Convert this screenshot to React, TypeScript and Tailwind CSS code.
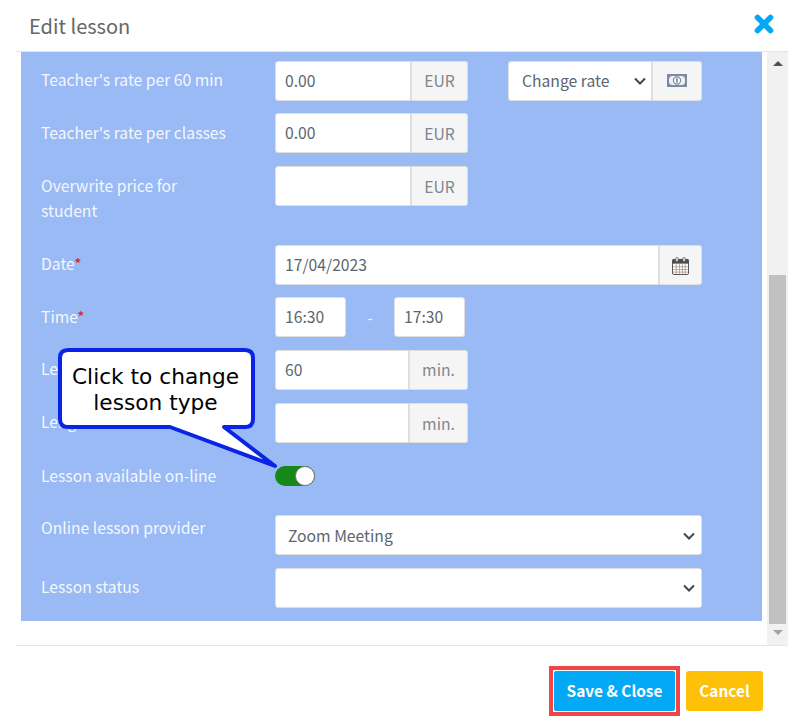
import React from "react";

const font = { fontFamily: '"Noto Sans CJK SC", "Noto Sans", sans-serif' };

function Row({ mt, label, req, children, labelClass = "pt-[6px]" }: { mt: string; label: React.ReactNode; req?: boolean; children?: React.ReactNode; labelClass?: string }) {
  return (
    <div className={`flex items-start ${mt}`}>
      <div className={`w-[234px] shrink-0 text-[#f4f7fe] text-[15.7px] leading-[25px] ${labelClass}`}>
        {label}
        {req && <span className="text-[#e0192f]">*</span>}
      </div>
      {children}
    </div>
  );
}

function Input({ value, w, noRadiusRight }: { value?: string; w: string; noRadiusRight?: boolean }) {
  return (
    <div className={`${w} h-10 bg-white border border-[#dedede] ${noRadiusRight ? "rounded-l-[3px]" : "rounded-[3px]"} flex items-center pl-[9px] text-[15.7px] text-[#5c6670] shrink-0`}>
      {value}
    </div>
  );
}

function Addon({ w, children, low }: { w: string; children: React.ReactNode; low?: boolean }) {
  return (
    <div className={`${w} h-10 bg-[#f5f5f5] border border-[#dedede] border-l-[#e0e0e0] rounded-r-[3px] flex items-center justify-center text-[15.7px] text-[#7e8791] shrink-0 ${low ? "pt-[2px]" : ""}`}>
      {children}
    </div>
  );
}

function Chevron() {
  return (
    <svg width="12" height="8" viewBox="0 0 12 8" fill="none" className="shrink-0">
      <path d="M1 1.5 L6 6.5 L11 1.5" stroke="#444" strokeWidth="2" />
    </svg>
  );
}

function MoneyIcon() {
  return (
    <svg width="20" height="13" viewBox="0 0 20 13" className="mb-[2px]">
      <rect x="0" y="0" width="20" height="13" fill="#7c8ba0" />
      <rect x="2" y="2" width="16" height="9" rx="3.5" fill="#eef1f5" />
      <circle cx="10" cy="6.5" r="3.6" fill="#fff" stroke="#7c8ba0" strokeWidth="1.2" />
      <rect x="9.3" y="4.2" width="1.4" height="4.6" fill="#6c7b90" />
    </svg>
  );
}

function CalendarIcon() {
  return (
    <svg width="17" height="18" viewBox="0 0 18 19" className="mt-[1px]">
      <rect x="0.5" y="2.5" width="17" height="16" rx="1.5" fill="#fff" stroke="#4d4d4d" />
      <rect x="0.5" y="2.5" width="17" height="4.5" fill="#4d4d4d" />
      <rect x="4" y="0.5" width="2.4" height="4.5" rx="1.2" fill="#fff" stroke="#4d4d4d" strokeWidth="0.8" />
      <rect x="11.6" y="0.5" width="2.4" height="4.5" rx="1.2" fill="#fff" stroke="#4d4d4d" strokeWidth="0.8" />
      <path d="M1 10.3H17M1 13.3H17M1 16H17M4.5 7V18M8 7V18M11 7V18M14 7V18" stroke="#a08468" strokeWidth="0.7" />
    </svg>
  );
}

function Callout() {
  return (
    <div className="absolute left-[56px] top-[346px] w-[224px] h-[124px]">
      <svg width="224" height="124" viewBox="0 0 224 124" className="absolute inset-0">
        <path
          d="M12 4 H189 Q197 4 197 12 V73 Q197 81 189 81 H168 L219 120 L114 81 H12 Q4 81 4 73 V12 Q4 4 12 4 Z"
          fill="#fff"
          stroke="#0a24e6"
          strokeWidth="4"
          strokeLinejoin="round"
        />
      </svg>
      <div
        className="absolute left-[3px] top-[18px] w-[193px] text-center text-black text-[21.7px] leading-[26px]"
        style={{ fontFamily: '"DejaVu Sans", sans-serif' }}
      >
        Click to change
        <br />
        lesson type
      </div>
    </div>
  );
}

export default function App() {
  return (
    <div className="relative w-[804px] h-[728px] bg-white overflow-hidden" style={font}>
      <div className="ml-4 w-[772px]">
        <div className="h-[52px] border-b border-[#e5e5e5] flex items-center justify-between pl-[13px] pr-[14px]">
          <div className="text-[20px] text-[#666] pt-[1px]">Edit lesson</div>
          <svg width="20" height="20" viewBox="0 0 20 20" className="mb-[4px]">
            <path d="M3.5 3.5 L16.5 16.5 M16.5 3.5 L3.5 16.5" stroke="#03a9f4" strokeWidth="5.6" strokeLinecap="round" />
          </svg>
        </div>
        <div className="flex h-[594px] border-b border-[#e5e5e5]">
          <div className="ml-[5px] w-[741px] h-[569px] bg-[#99baf4] pl-5 pt-[9px] shrink-0">
            <Row mt="" label="Teacher's rate per 60 min">
              <Input w="w-[136px]" value="0.00" noRadiusRight />
              <Addon w="w-[57px]">EUR</Addon>
              <div className="ml-10 w-[144px] h-10 bg-white border border-[#dedede] rounded-l-[3px] flex items-center justify-between pl-[13px] pr-[5px] text-[15.7px] text-[#5c6670]">
                Change rate
                <Chevron />
              </div>
              <Addon w="w-[50px]"><MoneyIcon /></Addon>
            </Row>
            <Row mt="mt-3" label="Teacher's rate per classes" labelClass="pt-[7px]">
              <Input w="w-[136px]" value="0.00" noRadiusRight />
              <Addon w="w-[57px]" low>EUR</Addon>
            </Row>
            <div className="h-[79px] mt-[13px]">
              <Row mt="" label={<>Overwrite price for<br />student</>} labelClass="pt-[7px]">
                <Input w="w-[136px]" noRadiusRight />
                <Addon w="w-[57px]" low>EUR</Addon>
              </Row>
            </div>
            <Row mt="" label="Date" req>
              <Input w="w-[384px]" value="17/04/2023" noRadiusRight />
              <Addon w="w-[43px]"><CalendarIcon /></Addon>
            </Row>
            <Row mt="mt-3" label="Time" req labelClass="pt-[7px]">
              <Input w="w-[71px]" value="16:30" />
              <div className="w-[48px] h-10 flex items-center justify-center text-[#eef3fd] text-[16px]">-</div>
              <Input w="w-[71px]" value="17:30" />
            </Row>
            <Row mt="mt-[13px]" label="Length">
              <Input w="w-[134px]" value="60" noRadiusRight />
              <Addon w="w-[59px]">min.</Addon>
            </Row>
            <Row mt="mt-[13px]" label="Length">
              <Input w="w-[134px]" noRadiusRight />
              <Addon w="w-[59px]" low>min.</Addon>
            </Row>
            <div className="flex items-center h-5 mt-[23px]">
              <div className="w-[234px] shrink-0 text-[#f4f7fe] text-[15.7px] leading-[25px] pb-[2px]">Lesson available on-line</div>
              <div className="w-10 h-5 rounded-full bg-[#16881a] flex items-center justify-end">
                <div className="w-5 h-5 rounded-full bg-white border border-[#777]" />
              </div>
            </div>
            <Row mt="mt-[29px]" label="Online lesson provider" labelClass="pt-0">
              <div className="w-[427px] h-10 bg-white border border-[#dedede] rounded-[3px] flex items-center justify-between pl-[12px] pr-[6px] pt-[1px] text-[15.7px] text-[#5c6670]">
                Zoom Meeting
                <Chevron />
              </div>
            </Row>
            <Row mt="mt-[13px]" label="Lesson status">
              <div className="w-[427px] h-10 bg-white border border-[#dedede] rounded-[3px] flex items-center justify-end pr-[6px]">
                <Chevron />
              </div>
            </Row>
          </div>
          <div className="ml-[5px] w-[21px] h-full bg-[#f1f1f1] flex flex-col items-center shrink-0">
            <div className="h-[223px] w-full flex justify-center pt-[9px]">
              <div className="w-0 h-0 border-x-[5px] border-x-transparent border-b-[5px] border-b-[#505050]" />
            </div>
            <div className="w-[17px] h-[349px] bg-[#c1c1c1]" />
            <div className="flex-1 w-full flex justify-center pt-[6px]">
              <div className="w-0 h-0 border-x-[5px] border-x-transparent border-t-[5px] border-t-[#a3a3a3]" />
            </div>
          </div>
        </div>
        <div className="flex justify-end items-center h-[82px] pr-[25px] pt-[8px]">
          <div className="border-[4px] border-[#f44545] mr-[6px] p-[1px]">
            <button className="block w-[121px] h-10 bg-[#03a9f4] text-white text-[15.4px] font-semibold rounded-[2px]">Save &amp; Close</button>
          </div>
          <button className="block w-[77px] h-10 bg-[#ffc107] text-white text-[15.4px] font-semibold rounded-[3px]">Cancel</button>
        </div>
      </div>
      <Callout />
    </div>
  );
}
